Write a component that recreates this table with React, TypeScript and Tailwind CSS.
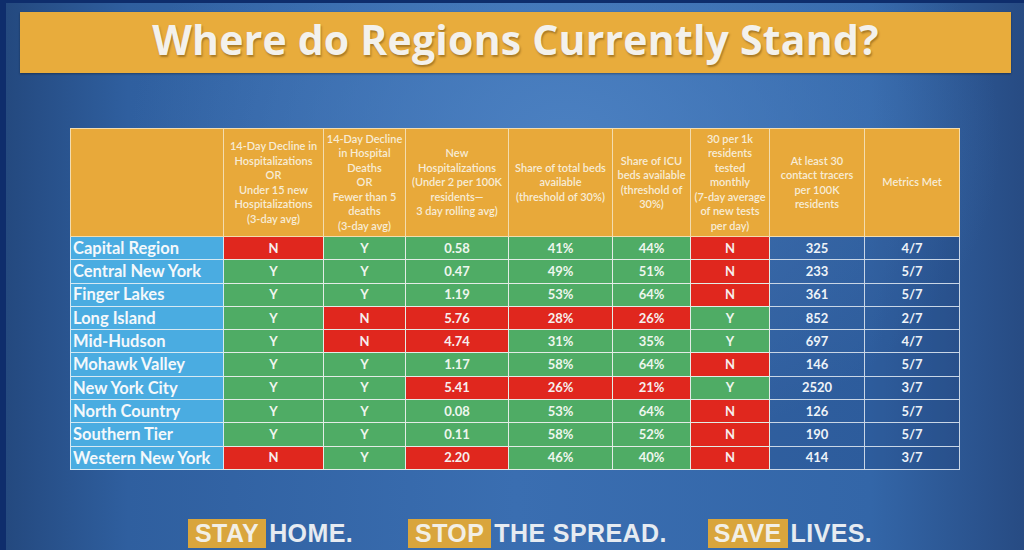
import React from "react";

type Row = [string, string, string, string, string, string, string, string, string];

const rows: Row[] = [
    ["Capital Region", "N", "Y", "0.58", "41%", "44%", "N", "325", "4/7"],
    ["Central New York", "Y", "Y", "0.47", "49%", "51%", "N", "233", "5/7"],
    ["Finger Lakes", "Y", "Y", "1.19", "53%", "64%", "N", "361", "5/7"],
    ["Long Island", "Y", "N", "5.76", "28%", "26%", "Y", "852", "2/7"],
    ["Mid-Hudson", "Y", "N", "4.74", "31%", "35%", "Y", "697", "4/7"],
    ["Mohawk Valley", "Y", "Y", "1.17", "58%", "64%", "N", "146", "5/7"],
    ["New York City", "Y", "Y", "5.41", "26%", "21%", "Y", "2520", "3/7"],
    ["North Country", "Y", "Y", "0.08", "53%", "64%", "N", "126", "5/7"],
    ["Southern Tier", "Y", "Y", "0.11", "58%", "52%", "N", "190", "5/7"],
    ["Western New York", "N", "Y", "2.20", "46%", "40%", "N", "414", "3/7"],
];

const headers: string[][] = [
    [],
    ["14-Day Decline in", "Hospitalizations", "OR", "Under 15 new", "Hospitalizations", "(3-day avg)"],
    ["14-Day Decline", "in Hospital", "Deaths", "OR", "Fewer than 5", "deaths", "(3-day avg)"],
    ["New", "Hospitalizations", "(Under 2 per 100K", "residents\u2014", "3 day rolling avg)"],
    ["Share of total beds", "available", "(threshold of 30%)"],
    ["Share of ICU", "beds available", "(threshold of", "30%)"],
    ["30 per 1k", "residents", "tested", "monthly", "(7-day average", "of new tests", "per day)"],
    ["At least 30", "contact tracers", "per 100K", "residents"],
    ["Metrics Met"],
];

// which metric cells fail the threshold (shown red)
const isBad = (col: number, value: string) => {
    if (col === 1 || col === 2 || col === 6) return value === "N";
    if (col === 3) return parseFloat(value) > 2;
    if (col === 4 || col === 5) return parseFloat(value) < 30;
    return false;
};

const App = () => {
    return (
        <div className="w-[1024px] h-[550px] overflow-hidden flex flex-col border-t-[3px] border-l-[6px] border-[#0e2d6c] bg-[radial-gradient(ellipse_at_55%_25%,#4b80c1_0%,rgba(75,128,193,0)_55%),linear-gradient(to_right,#24497f_0%,#2f5f9f_12%,#3a6eb1_50%,#3366a8_85%,#274b83_100%)]">
            {/* Title */}
            <div className="mt-[9px] ml-[14px] w-[991px] h-[61px] shrink-0 bg-[#e8ac3c] shadow-[0_1px_2px_rgba(0,0,0,0.35)] flex items-center justify-center">
                <h1 className="pb-[5px] text-[41px] tracking-[0.2px] font-bold text-[#f3f1ec] [font-family:'Open_Sans',sans-serif] [text-shadow:1px_2px_2px_rgba(90,60,10,0.45)]">
                    Where do Regions Currently Stand?
                </h1>
            </div>

            {/* Table */}
            <table className="mt-[55px] ml-[64px] w-[889px] table-fixed border-collapse [font-family:Lato,'Open_Sans',sans-serif]">
                <colgroup>
                    <col className="w-[153px]" />
                    <col className="w-[100px]" />
                    <col className="w-[82px]" />
                    <col className="w-[103px]" />
                    <col className="w-[104px]" />
                    <col className="w-[78px]" />
                    <col className="w-[79px]" />
                    <col className="w-[95px]" />
                    <col className="w-[95px]" />
                </colgroup>
                <thead>
                    <tr className="h-[108px]">
                        {headers.map((lines, i) => (
                            <th
                                key={i}
                                className="p-0 border border-[#f3dcae] bg-[#e8a93a] align-middle text-center text-[11px] leading-[14.5px] font-semibold text-[#f7ecd6] whitespace-nowrap overflow-hidden"
                            >
                                {lines.map((l, j) => (
                                    <div key={j}>{l}</div>
                                ))}
                            </th>
                        ))}
                    </tr>
                </thead>
                <tbody>
                    {rows.map((row) => (
                        <tr key={row[0]} className="h-[23.3px]">
                            <td className="p-0 pl-[2px] border border-[#d6e9f3] bg-[#4aace1] text-left text-[16.5px] leading-none font-bold text-[#f4f8fb] whitespace-nowrap">
                                {row[0]}
                            </td>
                            {row.slice(1, 7).map((v, i) => (
                                <td
                                    key={i}
                                    className={
                                        isBad(i + 1, v)
                                            ? "p-0 border border-[#e3ece6] bg-[#e0271e] text-center text-[13px] leading-none font-bold text-[#f6eeee]"
                                            : "p-0 border border-[#e3ece6] bg-[#4fac65] text-center text-[13px] leading-none font-bold text-[#eef6ee]"
                                    }
                                >
                                    {v}
                                </td>
                            ))}
                            <td className="p-0 border border-[#c9d6e6] bg-[#17386f]/20 text-center text-[13px] leading-none font-bold text-[#eef3f8]">
                                {row[7]}
                            </td>
                            <td className="p-0 border border-[#c9d6e6] bg-[#17386f]/20 text-center text-[13px] leading-none font-bold text-[#eef3f8]">
                                {row[8]}
                            </td>
                        </tr>
                    ))}
                </tbody>
            </table>

            {/* Slogans */}
            <div className="mt-[49px] ml-[182px] flex items-center h-[29px] text-[25px] font-bold tracking-[0.4px] [font-family:'Liberation_Sans',Arial,sans-serif]">
                <span className="h-[29px] px-[7px] flex items-center bg-[#d9a53c] text-[#f2efe6]">STAY</span>
                <span className="ml-[3px] text-[#e6ebf1]">HOME.</span>
                <span className="ml-[55px] h-[29px] px-[7px] flex items-center bg-[#d9a53c] text-[#f2efe6]">STOP</span>
                <span className="ml-[3px] text-[#e6ebf1]">THE SPREAD.</span>
                <span className="ml-[41px] h-[29px] px-[6px] flex items-center bg-[#d9a53c] text-[#f2efe6]">SAVE</span>
                <span className="ml-[3px] text-[#e6ebf1]">LIVES.</span>
            </div>
        </div>
    );
};

export default App;
